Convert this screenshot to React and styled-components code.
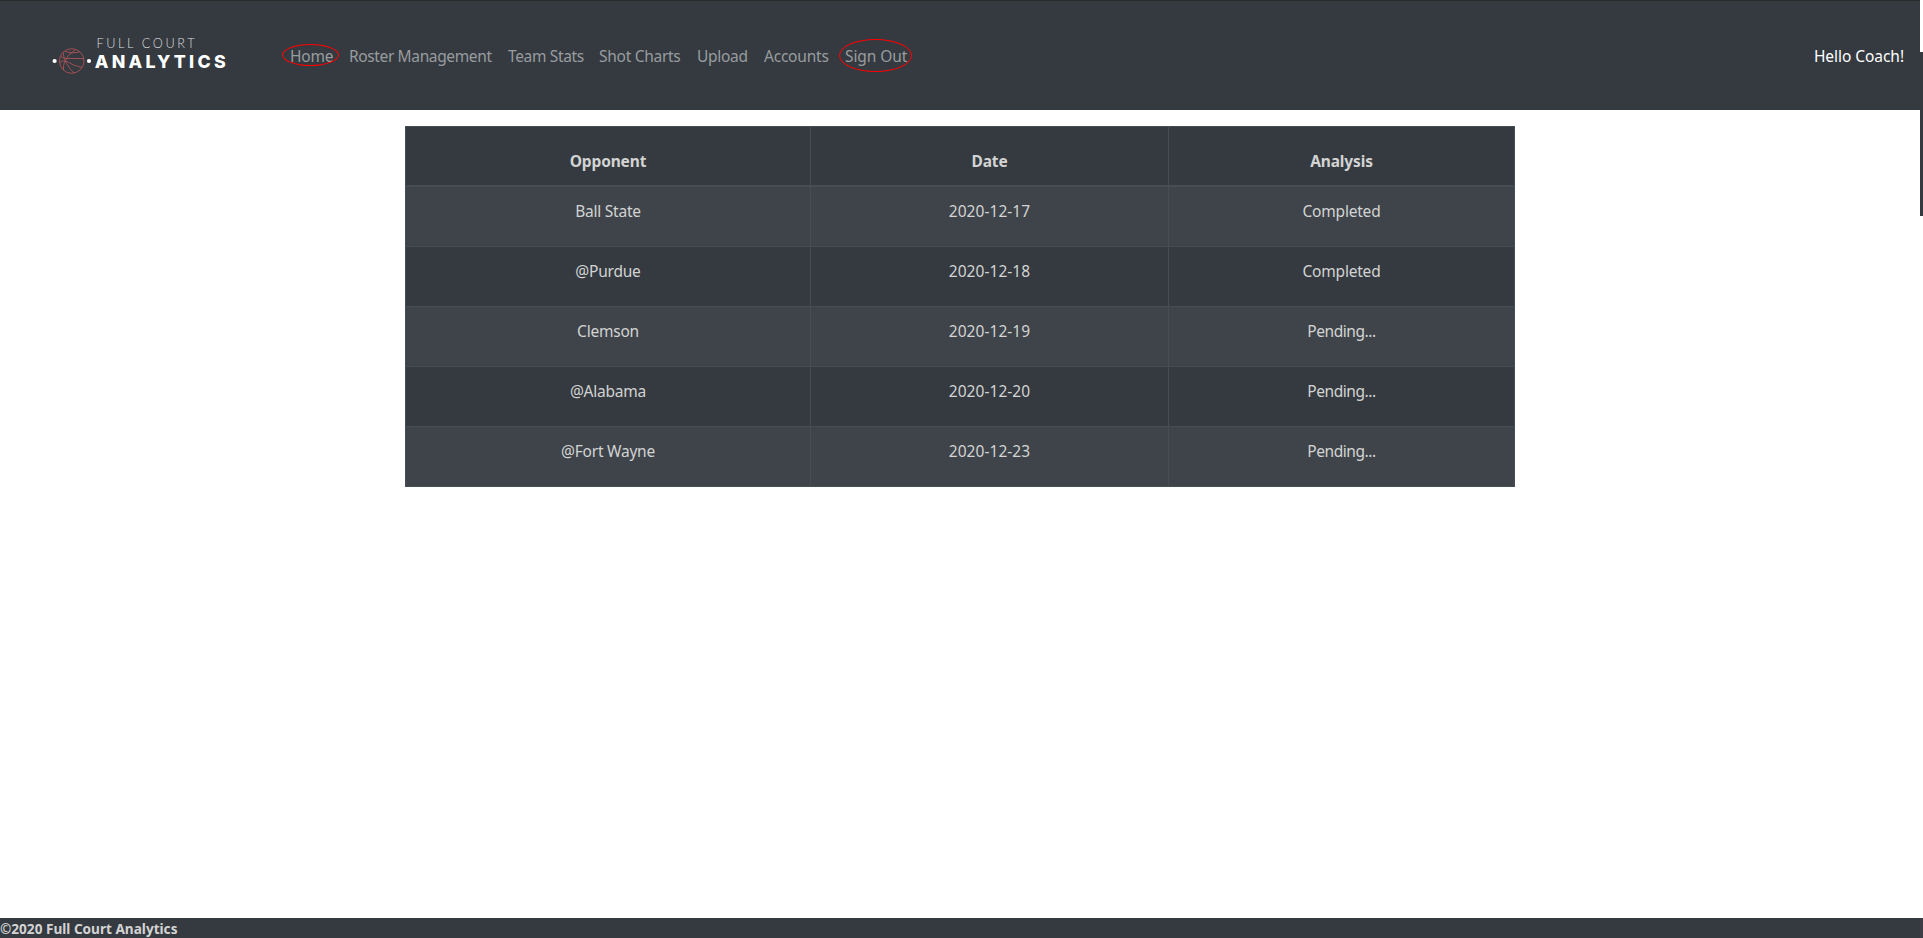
import React from "react";
import styled, { createGlobalStyle } from "styled-components";

const GlobalStyle = createGlobalStyle`
  *, *::before, *::after { box-sizing: border-box; }
  html, body { margin: 0; background: #fff; overflow: hidden; }
  body {
    font-family: "Noto Sans", "Open Sans", sans-serif;
    font-size: 15.5px;
    line-height: 24px;
  }
`;

const Page = styled.div`
  display: flex;
  height: 100vh;
`;

const Main = styled.div`
  flex: 1;
  display: flex;
  flex-direction: column;
`;

const Edge = styled.div`
  width: 3px;
  padding-top: 52px;
  display: flex;
  flex-direction: column;
  justify-content: space-between;
`;

const EdgeThumb = styled.div`
  height: 164px;
  background: #343a40;
`;

const EdgeFoot = styled.div`
  height: 20px;
  background: #3d3d45;
`;

const Header = styled.header`
  height: 110px;
  flex: none;
  display: flex;
  align-items: center;
  padding: 1px 16px 0 40px;
  background: #343a40;
  border-top: 1px solid #292a2b;
`;

const Logo = styled.svg`
  width: 200px;
  height: 60px;
  display: block;
  margin: 0 42px 2px 0;
`;

const Nav = styled.nav`
  display: flex;
  flex: 1;
`;

const NavLink = styled.a`
  position: relative;
  width: ${(p) => p.$width}px;
  padding-left: 8px;
  white-space: nowrap;
  letter-spacing: ${(p) => p.$spacing}px;
  color: #999c9f;
`;

const Ring = styled.span`
  position: absolute;
  left: ${(p) => p.$x}px;
  top: ${(p) => p.$y}px;
  width: ${(p) => p.$w}px;
  height: ${(p) => p.$h}px;
  border: 1px solid #ff0000;
  border-radius: 50%;
`;

const Greeting = styled.span`
  color: #fff;
  letter-spacing: -0.05px;
  white-space: nowrap;
`;

const Content = styled.main`
  flex: 1;
  display: flex;
  justify-content: center;
  align-items: flex-start;
  padding-top: 16px;
`;

const Table = styled.table`
  width: 1110px;
  table-layout: fixed;
  border-collapse: separate;
  border-spacing: 0;
  border: solid #454d55;
  border-width: 1px 0 0 1px;
  color: #d3d3d3;
  text-align: center;
`;

const Column = styled.col`
  width: ${(p) => p.$width}px;
`;

const HeadCell = styled.th`
  height: 60px;
  padding: 22px 12px 0;
  vertical-align: top;
  background: #343a40;
  border: solid #454d55;
  border-width: 0 1px 2px 0;
  font-weight: 700;
  letter-spacing: -0.15px;
`;

const Row = styled.tr`
  background: ${(p) => (p.$striped ? "#3e444a" : "#343a40")};
`;

const Cell = styled.td`
  height: 60px;
  padding: 12px 12px 0;
  vertical-align: top;
  border: solid #454d55;
  border-width: 0 1px 1px 0;
  letter-spacing: ${(p) => p.$spacing}px;
`;

const Footer = styled.footer`
  height: 20px;
  background: #343a40;
  color: #d3d3d3;
  font-size: 13.6px;
  font-weight: 700;
  line-height: 21px;
`;

const links = [
  { label: "Home", width: 59, spacing: -0.2, ring: { $x: 0, $y: 0, $w: 57, $h: 22 } },
  { label: "Roster Management", width: 159, spacing: -0.37 },
  { label: "Team Stats", width: 91, spacing: -0.35 },
  { label: "Shot Charts", width: 98, spacing: -0.28 },
  { label: "Upload", width: 67, spacing: -0.3 },
  { label: "Accounts", width: 81, spacing: -0.22 },
  { label: "Sign Out", width: 78, spacing: -0.1, ring: { $x: 2, $y: -5, $w: 73, $h: 33 } },
];

const games = [
  { opponent: "Ball State", date: "2020-12-17", status: "Completed" },
  { opponent: "@Purdue", date: "2020-12-18", status: "Completed" },
  { opponent: "Clemson", date: "2020-12-19", status: "Pending..." },
  { opponent: "@Alabama", date: "2020-12-20", status: "Pending..." },
  { opponent: "@Fort Wayne", date: "2020-12-23", status: "Pending..." },
];

function Brand() {
  return (
    <Logo viewBox="0 0 200 60" role="img" aria-label="Full Court Analytics">
      <g fill="none" stroke="#b95559" strokeWidth="0.8">
        <circle cx="31.7" cy="36" r="12.3" />
        <path d="M35.5 24.5 Q27 30 24.5 37 Q23 41 23.5 45" />
        <path d="M25.5 33.5 H44" />
        <path d="M19.5 37.5 Q23 34.5 27 36.5 Q34 41 42 42.5" />
        <path d="M23 27.5 Q24.5 39 34 48" />
        <path d="M20.5 31 Q23 33.5 25.5 33.5" />
        <path d="M25 26.5 Q33 29 39.5 27" />
      </g>
      <circle cx="14.6" cy="36" r="2.1" fill="#fff" />
      <circle cx="49" cy="36" r="2.1" fill="#fff" />
      <text x="56.5" y="22.8" textLength="98" fontFamily="Lato" fontWeight="300" fontSize="12.7" fill="#dcdddf">
        FULL COURT
      </text>
      <text x="54.7" y="42.6" textLength="131" fontFamily="Inter" fontWeight="800" fontSize="17.8" fill="#fff">
        ANALYTICS
      </text>
    </Logo>
  );
}

export default function App() {
  return (
    <>
      <GlobalStyle />
      <Page>
        <Main>
          <Header>
            <Brand />
            <Nav>
              {links.map((l) => (
                <NavLink key={l.label} $width={l.width} $spacing={l.spacing}>
                  {l.label}
                  {l.ring && <Ring {...l.ring} />}
                </NavLink>
              ))}
            </Nav>
            <Greeting>Hello Coach!</Greeting>
          </Header>
          <Content>
            <Table>
              <colgroup>
                <Column $width={405} />
                <Column $width={358} />
                <Column $width={346} />
              </colgroup>
              <thead>
                <tr>
                  <HeadCell>Opponent</HeadCell>
                  <HeadCell>Date</HeadCell>
                  <HeadCell>Analysis</HeadCell>
                </tr>
              </thead>
              <tbody>
                {games.map((g, i) => (
                  <Row key={g.date} $striped={i % 2 === 0}>
                    <Cell $spacing={-0.22}>{g.opponent}</Cell>
                    <Cell $spacing={0.05}>{g.date}</Cell>
                    <Cell $spacing={g.status === "Completed" ? -0.2 : -0.42}>{g.status}</Cell>
                  </Row>
                ))}
              </tbody>
            </Table>
          </Content>
          <Footer>©2020 Full Court Analytics</Footer>
        </Main>
        <Edge>
          <EdgeThumb />
          <EdgeFoot />
        </Edge>
      </Page>
    </>
  );
}
